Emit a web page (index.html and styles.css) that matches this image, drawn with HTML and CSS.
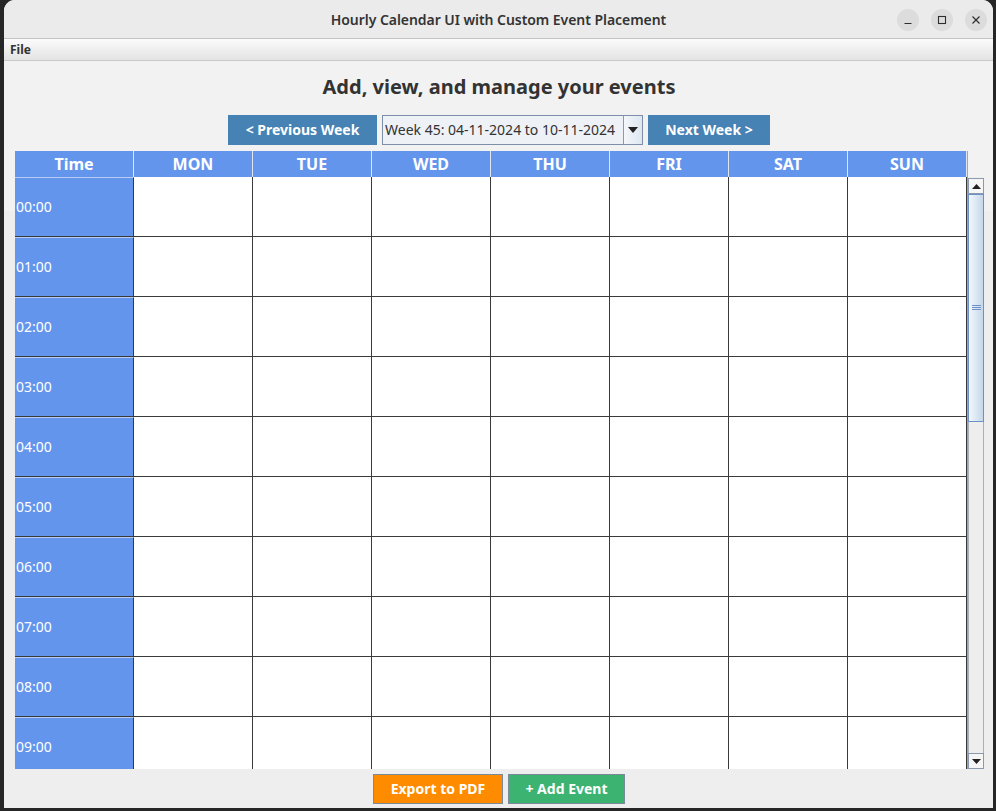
FILE: index.html
```html
<!DOCTYPE html>
<html>
<head>
<meta charset="utf-8">
<title>Hourly Calendar UI with Custom Event Placement</title>
<link rel="stylesheet" href="styles.css">
</head>
<body>
<div class="window">
  <div class="titlebar">
    <span></span>
    <span class="title">Hourly Calendar UI with Custom Event Placement</span>
    <div class="controls">
      <span class="ctl"><svg width="10" height="10" viewBox="0 0 10 10"><path d="M1.5 8.5h7" stroke="#2e2e2e" stroke-width="1.2"/></svg></span>
      <span class="ctl"><svg width="10" height="10" viewBox="0 0 10 10"><rect x="1.5" y="1.5" width="7" height="7" fill="none" stroke="#2e2e2e" stroke-width="1.1"/></svg></span>
      <span class="ctl"><svg width="10" height="10" viewBox="0 0 10 10"><path d="M1.5 1.5l7 7M8.5 1.5l-7 7" stroke="#2e2e2e" stroke-width="1.2"/></svg></span>
    </div>
  </div>
  <div class="menubar"><span class="menu">File</span></div>
  <div class="content">
    <h1 class="heading">Add, view, and manage your events</h1>
    <div class="nav">
      <button class="btn btn-nav btn-prev">&lt; Previous Week</button>
      <div class="combo">
        <span class="combo-text">Week 45: 04-11-2024 to 10-11-2024</span>
        <span class="combo-arrow"><svg width="10" height="6" viewBox="0 0 10 6"><path d="M0 0h10L5 6z" fill="#222"/></svg></span>
      </div>
      <button class="btn btn-nav btn-next">Next Week &gt;</button>
    </div>
    <div class="table">
      <div class="thead-row">
        <div class="thead">
          <div class="th">Time</div><div class="th">MON</div><div class="th">TUE</div><div class="th">WED</div><div class="th">THU</div><div class="th">FRI</div><div class="th">SAT</div><div class="th">SUN</div>
        </div>
        <div class="thead-corner"></div>
      </div>
      <div class="tbody-row">
        <div class="viewport">
          <div class="grid">
            <div class="tc">00:00</div><div class="c"></div><div class="c"></div><div class="c"></div><div class="c"></div><div class="c"></div><div class="c"></div><div class="c"></div>
            <div class="tc">01:00</div><div class="c"></div><div class="c"></div><div class="c"></div><div class="c"></div><div class="c"></div><div class="c"></div><div class="c"></div>
            <div class="tc">02:00</div><div class="c"></div><div class="c"></div><div class="c"></div><div class="c"></div><div class="c"></div><div class="c"></div><div class="c"></div>
            <div class="tc">03:00</div><div class="c"></div><div class="c"></div><div class="c"></div><div class="c"></div><div class="c"></div><div class="c"></div><div class="c"></div>
            <div class="tc">04:00</div><div class="c"></div><div class="c"></div><div class="c"></div><div class="c"></div><div class="c"></div><div class="c"></div><div class="c"></div>
            <div class="tc">05:00</div><div class="c"></div><div class="c"></div><div class="c"></div><div class="c"></div><div class="c"></div><div class="c"></div><div class="c"></div>
            <div class="tc">06:00</div><div class="c"></div><div class="c"></div><div class="c"></div><div class="c"></div><div class="c"></div><div class="c"></div><div class="c"></div>
            <div class="tc">07:00</div><div class="c"></div><div class="c"></div><div class="c"></div><div class="c"></div><div class="c"></div><div class="c"></div><div class="c"></div>
            <div class="tc">08:00</div><div class="c"></div><div class="c"></div><div class="c"></div><div class="c"></div><div class="c"></div><div class="c"></div><div class="c"></div>
            <div class="tc">09:00</div><div class="c"></div><div class="c"></div><div class="c"></div><div class="c"></div><div class="c"></div><div class="c"></div><div class="c"></div>
          </div>
        </div>
        <div class="scrollbar">
          <div class="sb-btn"><svg width="9" height="5" viewBox="0 0 9 5"><path d="M0 5h9L4.5 0z" fill="#222"/></svg></div>
          <div class="sb-thumb"><span class="grip"></span></div>
          <div class="sb-track"></div>
          <div class="sb-btn"><svg width="9" height="5" viewBox="0 0 9 5"><path d="M0 0h9L4.5 5z" fill="#222"/></svg></div>
        </div>
      </div>
    </div>
    <div class="actions">
      <button class="btn btn-export">Export to PDF</button>
      <button class="btn btn-add">+ Add Event</button>
    </div>
  </div>
</div>
</body>
</html>
```

FILE: styles.css
```css
* { box-sizing: border-box; }

body {
  margin: 0;
  background: #262626;
  font-family: "Noto Sans", "Open Sans", sans-serif;
}

.window {
  margin-left: 4px;
  width: 989px;
  height: 808px;
  background: #eeeeee;
  border-radius: 11px 11px 0 0;
  overflow: hidden;
  display: flex;
  flex-direction: column;
}

.titlebar {
  height: 39px;
  flex: none;
  background: #ebebeb;
  border-bottom: 1px solid #c4c4c4;
  display: grid;
  grid-template-columns: 1fr auto 1fr;
  align-items: center;
}

.title {
  font-size: 14px;
  font-weight: 600;
  color: #333333;
  padding-top: 1px;
  letter-spacing: -0.05px;
}

.controls {
  justify-self: end;
  display: flex;
  gap: 12px;
  padding-right: 6px;
  padding-top: 2px;
}

.ctl {
  width: 22px;
  height: 22px;
  border-radius: 50%;
  background: #dcdcdc;
  display: flex;
  align-items: center;
  justify-content: center;
}

.menubar {
  height: 22px;
  flex: none;
  background: linear-gradient(#fbfbfb, #e3e3e3);
  border-bottom: 1px solid #c9c9c9;
  display: flex;
  align-items: center;
  padding-left: 6px;
}

.menu {
  font-size: 12px;
  font-weight: 700;
  color: #333;
}

.content {
  flex: 1;
  display: flex;
  flex-direction: column;
  background: linear-gradient(#f2f2f2 0, #f2f2f2 150px, #eeeeee 150px);
}

.heading {
  margin: 13px 0 15px;
  height: 26px;
  line-height: 26px;
  text-align: center;
  font-size: 20px;
  font-weight: 700;
  color: #333333;
  padding-left: 1px;
}

.nav {
  display: flex;
  justify-content: center;
  gap: 5px;
  height: 30px;
  padding-left: 1px;
}

.btn {
  height: 30px;
  font-family: "Noto Sans", "Open Sans", sans-serif;
  font-size: 14px;
  font-weight: 700;
  color: #ffffff;
  border: 1px solid #7a8a99;
  padding: 0 0 2px;
  margin: 0;
}

.btn-nav {
  background: #4682b4;
  border-color: #4682b4;
}

.btn-prev { width: 149px; }
.btn-next { width: 122px; }

.combo {
  width: 261px;
  height: 30px;
  display: flex;
  border: 1px solid #7d8fa8;
  background: #eef1f5;
}

.combo-text {
  flex: 1;
  font-size: 14px;
  color: #333;
  line-height: 27px;
  padding-left: 2px;
  white-space: nowrap;
}

.combo-arrow {
  width: 19px;
  border-left: 1px solid #8a9ab0;
  background: linear-gradient(90deg, #f4f7fb, #dde6f0);
  display: flex;
  align-items: center;
  justify-content: center;
}

.table {
  margin: 6px 0 0 11px;
  width: 969px;
}

.thead-row {
  display: flex;
  height: 26px;
}

.thead {
  display: grid;
  grid-template-columns: repeat(8, 119px);
  width: 952px;
  border-bottom: 1px solid #8c8c8c;
}

.th {
  background: #6495ed;
  color: #ffffff;
  font-size: 16px;
  font-weight: 700;
  text-align: center;
  line-height: 26px;
  border-right: 1px solid #dfe6f2;
}

.thead-corner {
  flex: 1;
  border-left: 1px solid #a8a8a8;
}

.tbody-row {
  display: flex;
  height: 592px;
}

.viewport {
  width: 952px;
  height: 592px;
  overflow: hidden;
}

.grid {
  display: grid;
  grid-template-columns: repeat(8, 119px);
  grid-auto-rows: 60px;
  background: #ffffff;
}

.c {
  border-right: 1px solid #3a3a3a;
  border-bottom: 1px solid #3a3a3a;
  background: #ffffff;
}

.tc {
  background: #6495ed;
  color: #ffffff;
  font-size: 14px;
  border-right: 1px solid #3a3a3a;
  border-bottom: 1px solid #3a3a3a;
  border-top: 1px solid #b8ccf2;
  display: flex;
  align-items: center;
  padding-left: 1px;
  padding-bottom: 1px;
}

.scrollbar {
  width: 17px;
  display: flex;
  flex-direction: column;
  background: #eeeeee;
  border-left: 1px solid #9aa5b4;
  padding-top: 1px;
}

.sb-btn {
  height: 16px;
  flex: none;
  background: #f6f6f6;
  border: 1px solid #8a99ad;
  display: flex;
  align-items: center;
  justify-content: center;
}

.sb-thumb {
  height: 228px;
  flex: none;
  background: linear-gradient(90deg, #f2f7fc, #c5d8ea);
  border: 1px solid #6f8fc9;
  display: flex;
  justify-content: center;
  padding-top: 110px;
}

.grip {
  width: 9px;
  height: 5px;
  border-top: 1px solid #6f8fc9;
  border-bottom: 1px solid #6f8fc9;
  background: linear-gradient(transparent 1px, #6f8fc9 1px, #6f8fc9 2px, transparent 2px);
}

.sb-track {
  flex: 1;
  background: #eeeeee;
  border-left: 1px solid #a8b0bc;
  border-right: 1px solid #a8b0bc;
}

.actions {
  display: flex;
  justify-content: center;
  gap: 5px;
  margin-top: 5px;
  padding-left: 1px;
}

.btn-export {
  width: 130px;
  background: #ff8c00;
}

.btn-add {
  width: 117px;
  background: #3cb371;
}
```
